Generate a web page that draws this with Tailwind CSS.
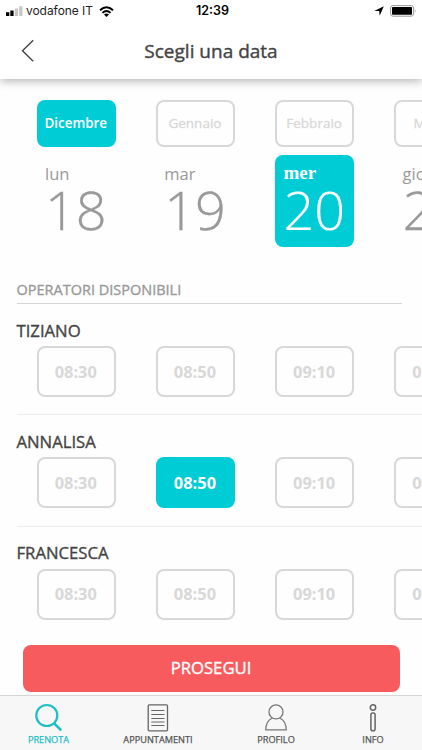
<!DOCTYPE html>
<html lang="it">
<head>
<meta charset="utf-8">
<title>Scegli una data</title>
<script src="https://cdn.jsdelivr.net/npm/@tailwindcss/browser@4"></script>
</head>
<body class="w-[422px] h-[750px] overflow-hidden bg-white font-['Open_Sans',sans-serif] text-[#444] whitespace-nowrap">
<div class="flex h-[750px] w-[422px] flex-col overflow-hidden bg-[#fefefe]">

  <header class="relative h-[79px] shrink-0 bg-white shadow-[0_2px_9px_rgba(0,0,0,0.3)]">
    <div class="grid h-[22px] grid-cols-[1fr_auto_1fr] items-center pr-[5px] pl-[6px] font-['Inter',sans-serif] text-black">
      <div class="flex items-center">
        <svg class="h-[10px] w-[17px]" viewBox="0 0 17 10"><path d="M0 6.2h3.3V10H0zM4.3 4.6h3.3V10H4.3z"/><path fill="#c6c6c6" d="M8.8 2.5h3.2V10H8.8zM13.2.3h3.2V10h-3.2z"/></svg>
        <span class="ml-[3px] w-[67px] text-[12px] leading-[22px] tracking-[-0.05px] text-[#222]">vodafone IT</span>
        <svg class="ml-[6px] h-[11px] w-[15px]" viewBox="0 0 15 11" fill="none" stroke="#000" stroke-width="2"><path d="M1 4.3Q7.5-1.7 14 4.3M3.4 6.9Q7.5 3 11.6 6.9"/><path fill="#000" stroke="none" d="M5 8.4Q7.5 6.5 10 8.4L7.5 11z"/></svg>
      </div>
      <span class="ml-[2px] text-[12.5px] leading-[22px] font-semibold">12:39</span>
      <div class="flex items-center justify-end">
        <svg class="mr-[6px] h-[10px] w-[10px]" viewBox="0 0 10 10"><path d="M9.8.3 5.7 9.8 5.2 5H.3z"/></svg>
        <svg class="h-[12px] w-[27px]" viewBox="0 0 27 12"><rect x=".6" y=".6" width="23" height="10.6" rx="2.4" fill="#fff" stroke="#999"/><rect x="2" y="2.1" width="20" height="7.6" rx=".8"/><path fill="#999" d="M24.8 4q1.8 1.9 0 3.8z"/></svg>
      </div>
    </div>
    <div class="grid h-[57px] grid-cols-[60px_1fr_60px] items-center">
      <svg class="ml-[21px] h-[24px] w-[14px]" viewBox="0 0 14 24" fill="none" stroke="#444" stroke-width="1.4"><path d="M12.2 1.2 1.5 11.7 12.2 22.2"/></svg>
      <h1 class="text-center text-[19px] leading-[56px] text-[#444] [-webkit-text-stroke:0.4px]">Scegli una data</h1>
    </div>
  </header>

  <nav class="mt-[21px] ml-[36.5px] flex h-[47px] shrink-0 gap-[39.7px] text-[13.5px] text-[#d8d8d8] [-webkit-text-stroke:0.3px]">
    <div class="flex w-[79.5px] shrink-0 items-center justify-center rounded-[8px] bg-[#00ccd5] pr-px text-[13.4px] font-semibold text-white [-webkit-text-stroke:0px]">Dicembre</div>
    <div class="flex w-[79.5px] shrink-0 items-center justify-center rounded-[8px] border-2 border-[#d8d8d8] pr-px">Gennaio</div>
    <div class="flex w-[79.5px] shrink-0 items-center justify-center rounded-[8px] border-2 border-[#d8d8d8] pr-px">Febbraio</div>
    <div class="flex w-[79.5px] shrink-0 items-center justify-center rounded-[8px] border-2 border-[#d8d8d8] pr-px">Marzo</div>
  </nav>

  <section class="mt-[8px] ml-[36.5px] flex h-[92px] shrink-0 gap-[39.7px] text-[#999]">
    <div class="w-[79.5px] shrink-0 pt-[8px] pl-[8.5px]"><p class="h-[22px] text-[16.5px] leading-[22px]">lun</p><p class="text-[54px] leading-[48px] font-light [-webkit-text-stroke:0.3px]">18</p></div>
    <div class="w-[79.5px] shrink-0 pt-[8px] pl-[8.5px]"><p class="h-[22px] text-[16.5px] leading-[22px]">mar</p><p class="text-[54px] leading-[48px] font-light [-webkit-text-stroke:0.3px]">19</p></div>
    <div class="w-[79.5px] shrink-0 rounded-[8px] bg-[#00ccd5] pt-[8px] pl-[8.5px] text-white"><p class="h-[22px] font-['Liberation_Serif',serif] text-[19px] leading-[20px] font-bold">mer</p><p class="text-[54px] leading-[48px] font-light [-webkit-text-stroke:0.2px]">20</p></div>
    <div class="w-[79.5px] shrink-0 pt-[8px] pl-[8.5px]"><p class="h-[22px] text-[16.5px] leading-[22px]">gio</p><p class="text-[54px] leading-[48px] font-light [-webkit-text-stroke:0.3px]">21</p></div>
  </section>

  <h2 class="mt-[32px] mr-[20px] ml-[16.5px] h-[25px] shrink-0 border-b-[1.5px] border-[#d6d6d6] text-[14.5px] leading-[21px] text-[#999] [-webkit-text-stroke:0.35px]">OPERATORI DISPONIBILI</h2>

  <section class="ml-[16.5px] h-[111px] shrink-0 border-b border-[#ececec] pt-[16px]">
    <h3 class="h-[26px] text-[16.7px] leading-[21px] [-webkit-text-stroke:0.35px]">TIZIANO</h3>
    <div class="ml-[20px] flex h-[51px] gap-[39.7px] text-[16.4px] font-bold text-[#d8d8d8]">
      <div class="flex w-[79.5px] shrink-0 items-center justify-center rounded-[8px] border-2 border-[#d8d8d8] pt-px pr-px">08:30</div>
      <div class="flex w-[79.5px] shrink-0 items-center justify-center rounded-[8px] border-2 border-[#d8d8d8] pt-px pr-px">08:50</div>
      <div class="flex w-[79.5px] shrink-0 items-center justify-center rounded-[8px] border-2 border-[#d8d8d8] pt-px pr-px">09:10</div>
      <div class="flex w-[79.5px] shrink-0 items-center justify-center rounded-[8px] border-2 border-[#d8d8d8] pt-px pr-px">09:30</div>
    </div>
  </section>
  <section class="ml-[16.5px] h-[111.5px] shrink-0 border-b border-[#ececec] pt-[16px]">
    <h3 class="h-[26px] text-[16.7px] leading-[21px] [-webkit-text-stroke:0.35px]">ANNALISA</h3>
    <div class="ml-[20px] flex h-[51px] gap-[39.7px] text-[16.4px] font-bold text-[#d8d8d8]">
      <div class="flex w-[79.5px] shrink-0 items-center justify-center rounded-[8px] border-2 border-[#d8d8d8] pt-px pr-px">08:30</div>
      <div class="flex w-[79.5px] shrink-0 items-center justify-center rounded-[8px] bg-[#00ccd5] pt-px pr-px text-white">08:50</div>
      <div class="flex w-[79.5px] shrink-0 items-center justify-center rounded-[8px] border-2 border-[#d8d8d8] pt-px pr-px">09:10</div>
      <div class="flex w-[79.5px] shrink-0 items-center justify-center rounded-[8px] border-2 border-[#d8d8d8] pt-px pr-px">09:30</div>
    </div>
  </section>
  <section class="ml-[16.5px] h-[118px] shrink-0 pt-[16px]">
    <h3 class="h-[26px] text-[16.7px] leading-[20px] [-webkit-text-stroke:0.35px]">FRANCESCA</h3>
    <div class="ml-[20px] flex h-[51px] gap-[39.7px] text-[16.4px] font-bold text-[#d8d8d8]">
      <div class="flex w-[79.5px] shrink-0 items-center justify-center rounded-[8px] border-2 border-[#d8d8d8] pr-px">08:30</div>
      <div class="flex w-[79.5px] shrink-0 items-center justify-center rounded-[8px] border-2 border-[#d8d8d8] pr-px">08:50</div>
      <div class="flex w-[79.5px] shrink-0 items-center justify-center rounded-[8px] border-2 border-[#d8d8d8] pr-px">09:10</div>
      <div class="flex w-[79.5px] shrink-0 items-center justify-center rounded-[8px] border-2 border-[#d8d8d8] pr-px">09:30</div>
    </div>
  </section>

  <button class="mr-[22.5px] ml-[22.5px] h-[47px] shrink-0 rounded-[8px] bg-[#f85b5d] text-[16.7px] text-white [-webkit-text-stroke:0.35px]">PROSEGUI</button>

  <footer class="mt-auto grid h-[55px] shrink-0 grid-cols-[97px_122px_114px_80px] border-t border-[#d5d5d5] bg-[#f7f7f7] text-center text-[9.2px] leading-[13px] text-[#555] [-webkit-text-stroke:0.25px]">
    <div class="flex flex-col items-center pt-[7px] text-[#1dbfc4]">
      <svg class="h-[30px] w-[28px]" viewBox="0 0 28 30" fill="none" stroke="currentColor" stroke-width="2.2"><circle cx="11.8" cy="12.5" r="10.5"/><path stroke-width="2.6" d="m19.2 20.3 7 7"/></svg>
      <span>PRENOTA</span>
    </div>
    <div class="flex flex-col items-center pt-[7px]">
      <svg class="h-[30px] w-[22px]" viewBox="0 0 22 30" fill="none" stroke="#666" stroke-width="1.3"><rect x="1.2" y="1.8" width="19.3" height="26" rx="1"/><path stroke-width="1" d="M4.3 7.5h13.2M4.3 11.5h13.2M4.3 15.5h13.2M4.3 19h13.2M4.3 22.5h13.2"/></svg>
      <span>APPUNTAMENTI</span>
    </div>
    <div class="flex flex-col items-center pt-[7px]">
      <svg class="h-[30px] w-[22px]" viewBox="0 0 22 30" fill="none" stroke="#777" stroke-width="1.3"><circle cx="11" cy="8.9" r="7"/><path d="M7.3 15C3.4 16.8.8 20.5.8 26.8h20.4C21.2 20.5 18.6 16.8 14.7 15"/></svg>
      <span>PROFILO</span>
    </div>
    <div class="flex flex-col items-center pt-[7px]">
      <svg class="h-[30px] w-[8px]" viewBox="0 0 8 30" fill="none" stroke="#666" stroke-width="1.5"><circle cx="4" cy="4.5" r="2.7"/><rect x="1.9" y="10" width="4.2" height="17.8" rx="1.8"/></svg>
      <span>INFO</span>
    </div>
  </footer>
</div>
</body>
</html>
